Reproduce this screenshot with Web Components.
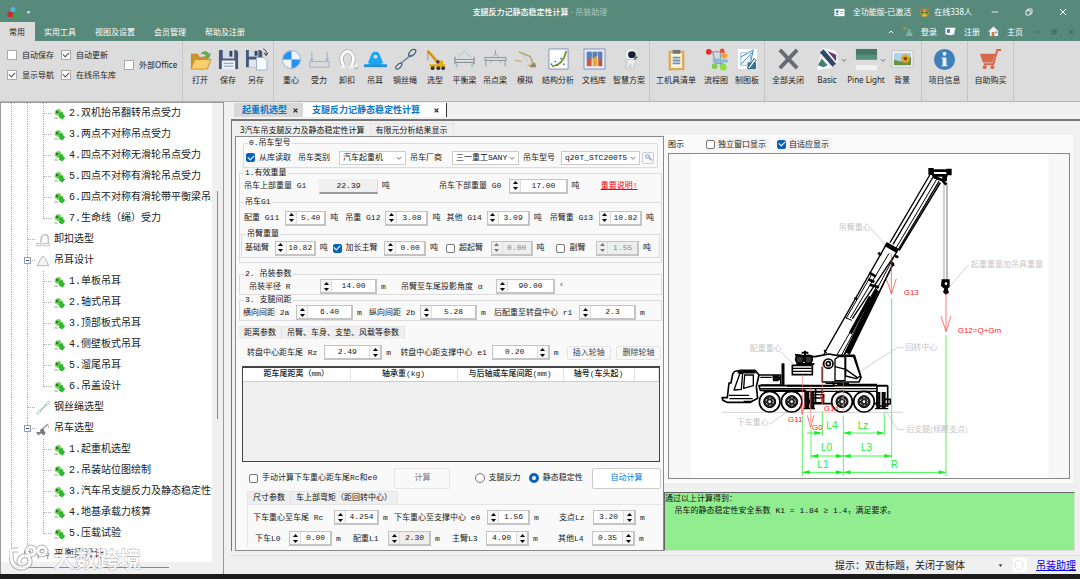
<!DOCTYPE html>
<html lang="zh-CN">
<head>
<meta charset="utf-8">
<title>支腿反力记静态稳定性计算 - 吊装助理</title>
<style>
body { margin: 0; background: #f0f0f0; --ui: "Noto Sans", "Noto Sans CJK SC", sans-serif; --form: "Liberation Mono", "Noto Sans CJK SC", monospace; font: 8px/12px var(--ui); color: #222; }
</style>
</head>
<body>
<crane-app></crane-app>
<script>
const BASE = `*{box-sizing:border-box}
button,input,select,textarea{font:inherit;color:inherit;margin:0;padding:0}
button{border:0;background:none;white-space:nowrap}
svg{display:block;flex:none}
label{display:flex;align-items:center;gap:4px;white-space:nowrap}
input[type=checkbox],input[type=radio]{appearance:none;flex:none;width:9px;height:9px;border:1px solid #777;border-radius:2px;background:#fdfdfd;display:grid;place-items:center}
input[type=checkbox]:checked{background:#0b62b5;border-color:#0b62b5}
input[type=checkbox]:checked::after{content:"";width:5px;height:3px;margin-bottom:2px;border:solid #fff;border-width:0 0 1px 1px;transform:rotate(-45deg)}
input[type=radio]{border-radius:50%;width:10px;height:10px}
input[type=radio]:checked{border:3px solid #0b62b5;background:#fff}`;

function define(name, css, render, after) {
  customElements.define(name, class extends HTMLElement {
    connectedCallback() {
      if (this.shadowRoot) return;
      const root = this.attachShadow({ mode: 'open' });
      const tpl = document.createElement('template');
      tpl.innerHTML = `<style>${BASE}${css}</style>${render(k => this.getAttribute(k) || '', this)}`;
      root.append(tpl.content.cloneNode(true));
      if (after) after(this, root);
    }
  });
}
const tracks = s => s.split(' ').map(n => `minmax(0,${n}fr)`).join(' ');

/* ---------- icon set ---------- */
const ICONS = {
  open: '<path d="M2 6h7l2 3h9v13H2z" fill="#c8922c"/><path d="M2 22l4-10h17l-4 10z" fill="#f8cf6c" stroke="#c8902c"/><path d="M12 6q5-5 9 0l2-1-2 6-6-2 3-1q-2-2-6-2z" fill="#6aa852"/>',
  save: '<path d="M2 2h18l2 2v18H2z" fill="#46577a"/><path d="M6 2h12v9H6z" fill="#d4dae6"/><path d="M13 3h3v6h-3z" fill="#35435f"/><path d="M5 13h14v9H5z" fill="#eef2f8"/><path d="M7 16h10M7 19h10" stroke="#7d93b5"/>',
  saveas: '<path d="M1 2h15l2 2v16H1z" fill="#46577a"/><path d="M4 2h10v7H4z" fill="#d4dae6"/><path d="M10 3h3v5h-3z" fill="#35435f"/><path d="M4 12h9v8H4z" fill="#dfe6f1"/><path d="M12 10h8l3 3v10H12z" fill="#f7faff" stroke="#9eafcc"/><path d="M19 1q4 1 3 6M20 5l2 3 2-3" fill="none" stroke="#333"/>',
  cog: '<circle cx="12" cy="12" r="9.500" fill="#eef4fb" stroke="#7e9cc0" stroke-width=".7"/><path d="M12 12V3A9 9 0 0 0 3 12zM12 12v9a9 9 0 0 0 9-9z" fill="#2492ee"/>',
  force: '<path d="M4 4v9M20 4v9" stroke="#8eb5d4"/><path d="M2 11l2 3 2-3zM18 11l2 3 2-3z" fill="#8eb5d4"/><path d="M2 14h20v6H2z" fill="#d8dadd" stroke="#a9afb6"/>',
  shackle: '<path d="M8 19Q4 11 7 7q5-7 10 0 3 4-1 12" fill="none" stroke="#aaa" stroke-width="4.500"/><path d="M8 19Q4 11 7 7q5-7 10 0 3 4-1 12" fill="none" stroke="#fff" stroke-width="3"/><path d="M5 20h5M14 20h6l2-3" stroke="#eee" stroke-width="3" fill="none"/><path d="M19 21h4" stroke="#999"/>',
  lug: '<path d="M3 18C9 18 5 4 12 4s3 14 9 14z" fill="#1ba6f5"/><path d="M4 16C8 5 9 4 12 4s4 1 8 12z" fill="#1ba6f5"/><path d="M0 17h24v3H0z" fill="#2191dc"/><circle cx="12" cy="9" r="2" fill="#dcdcdc"/>',
  sling: '<path d="M7 16L18 7" stroke="#6d86a0" stroke-width="1.500"/><ellipse cx="5" cy="19" rx="2" ry="4" transform="rotate(45 5 19)" fill="none" stroke="#4b6682" stroke-width="1.300"/><ellipse cx="19" cy="5" rx="2.500" ry="4.500" transform="rotate(45 19 5)" fill="none" stroke="#3f5e7e" stroke-width="1.300"/>',
  crane: '<path d="M4 3L16 17" stroke="#e5a51b" stroke-width="3"/><path d="M4 3L16 17M4 3v10" stroke="#9b7416" fill="none" stroke-width=".7"/><path d="M6 17h16v3H6zM14 13h6v4h-6z" fill="#e8ac16"/><path d="M13 13h3v3h-3z" fill="#333"/><g fill="#333"><circle cx="9" cy="21" r="2"/><circle cx="15" cy="21" r="2"/><circle cx="20" cy="21" r="2"/></g>',
  beam: '<path d="M5 10l7-7 7 7" fill="none" stroke="#9cc8d2"/><path d="M2 9v8M22 9v8M2 12h20v3H2z" fill="#e4e4e4" stroke="#8c9298" stroke-width="1.300"/><path d="M4 16v4M20 16v4" stroke="#9cc8d2" stroke-width="2"/>',
  beam2: '<path d="M12 2v5" stroke="#6fb0c0"/><path d="M8 10l4-4 4 4" fill="none" stroke="#9aa"/><path d="M1 10h22v3H1z" fill="#ddd" stroke="#8c9298"/><path d="M2 13v6M22 13v6M7 13v2M17 13v2" stroke="#8c9298"/>',
  sim: '<path d="M5 4l12 5 4 10" fill="none" stroke="#b4a373" stroke-width="1.500"/><path d="M16 18l6-3 1 5h-6z" fill="#8c8569"/><path d="M1 13l8 1M14 19l5-3" stroke="#d8ba8e" stroke-width="2"/><path d="M8 5l6 9" stroke="#aaa" stroke-width=".6"/>',
  chart: '<path d="M2 1h20v21H2z" fill="#fcfdff" stroke="#7e91b8"/><path d="M5 19Q17 18 20 3" fill="none" stroke="#78982e" stroke-width="2"/><path d="M4 17h1.500M8 14h1.500M10 18h1.500M14 11h1.500M17 17h1.500" stroke="#375cae" stroke-width="1.500"/>',
  docs: '<path d="M1 1h22v21H1z" fill="#e5ebf8" stroke="#8394bc"/><path d="M4 4h5v15H4z" fill="#d05742"/><path d="M10 4h5v15h-5z" fill="#e8aa36"/><path d="M16 4h4v15h-4z" fill="#c84b3b"/><path d="M4 4h5v6l-5 2zM10 4h5v4l-5 3zM16 4h4v7l-4 1z" fill="#4f82c7"/>',
  robot: '<circle cx="14" cy="7" r="5.500" fill="#f8f8f8"/><ellipse cx="14.500" cy="7" rx="4" ry="3.500" fill="#172132"/><path d="M10 12h7l2 3-2 1-1 6h-2l-1-5-3 5H8l2-7-3-1z" fill="#eceef1" stroke="#a5acb2" stroke-width=".5"/><path d="M17 12l3-3" stroke="#4b515c" stroke-width="1.500"/>',
  clip: '<path d="M5 4h14v18H5z" fill="#fff4db" stroke="#ddaa58" stroke-width="2.500"/><path d="M8 2h8v4H8z" fill="#70747b"/><path d="M8 10h8M8 13h8M8 16h8" stroke="#6b94c2" stroke-width="2"/>',
  flow: '<path d="M4 4h12M16 4v15M8 4l3 12h8" fill="none" stroke="#6d91b7"/><circle cx="4" cy="4" r="3" fill="#e52b2b"/><circle cx="18" cy="3" r="2.500" fill="#ec4c36"/><path d="M8 11h7v4H8z" fill="#85b8e0"/><path d="M20 4l4 4-4 4-4-4z" fill="#fa9f38"/><path d="M15 12h9v3h-9z" fill="#85b8e0"/><circle cx="19" cy="20" r="3.500" fill="#8be03f"/><circle cx="10" cy="19" r="3" fill="#82cd58"/>',
  board: '<path d="M2 1h20v21H2z" fill="#fff"/><path d="M4 10L18 2l-3 14M4 18L18 4" fill="none" stroke="#3c85b0"/><path d="M5 5h10v13H5z" fill="none" stroke="#96bfe0"/><path d="M12 15h9v7h-9z" fill="#3c718d"/><path d="M12 21l7-10 2 2-7 9z" fill="#e3eef4" stroke="#265d79"/>',
  close: '<path d="M3 2L21 21M21 2L3 21" stroke="#696b74" stroke-width="4"/>',
  basic: '<path d="M7 0l14 3 2 11-8 7-14 2 3-12z" fill="#f8f8f8"/><path d="M6 3L19 18" stroke="#31466d" stroke-width="5"/><path d="M2 18l4-7 6 7-4 2z" fill="#428078"/><path d="M12 3l9 4v7z" fill="#5f3b6e"/>',
  pine: '<path d="M1 1h22v11H1z" fill="#447767"/><path d="M1 7h22v5H1z" fill="#56907d"/><path d="M1 18h22v5H1z" fill="#f2f2f2"/>',
  back: '<path d="M1 3h22v17H1z" fill="#fff" stroke="#bbb"/><path d="M3 5h18v13H3z" fill="#afd3e8"/><path d="M3 12l7 2 11-5v9H3z" fill="#699344"/><circle cx="15" cy="11" r="4.500" fill="#e4a62c"/><circle cx="15" cy="11" r="2" fill="#845017"/>',
  info: '<circle cx="12" cy="12" r="11" fill="#3f80ba"/><circle cx="12" cy="6" r="2" fill="#e9f2fa"/><path d="M9 10h5v8h1v1H9v-1h1v-7H9z" fill="#e9f2fa"/>',
  cart: '<path d="M23 2h-4l-4 15H5" fill="none" stroke="#d86645" stroke-width="2"/><path d="M1 6h16l-3 9H4z" fill="#d9674a"/><circle cx="6" cy="20" r="2" fill="#d86645"/><circle cx="14" cy="20" r="2" fill="#d86645"/>',
  app: '<circle cx="12" cy="7" r="5" fill="#55b5df"/><path d="M1 12h9l2 3v7H3l-2-2z" fill="#c42f31"/><path d="M12 13h10l1 2v7H12z" fill="#3ba34b"/>',
  card: '<path d="M1 4h22v16H1z" fill="#fff"/><circle cx="7" cy="10" r="3" fill="#3c71ad"/><path d="M3 17q4-6 8 0zM14 9h6v2h-6zM14 14h6v1h-6z" fill="#54779f"/>',
  mask: '<circle cx="12" cy="13" r="9" fill="#c9a33b"/><path d="M2 2l9 5-6 6zM22 2l-9 5 6 6z" fill="#cf6d38"/><path d="M5 11h5v3H5zM14 11h5v3h-5z" fill="#33612d"/><path d="M6 17q6 5 12 0z" fill="#efd677"/><path d="M3 15l5 6M21 15l-5 6" stroke="#7a9f3c" stroke-width="3"/>',
  people: '<g opacity=".6"><circle cx="6" cy="5" r="4" fill="#c29549"/><circle cx="16" cy="10" r="4" fill="#84c0a6"/><path d="M9 22q0-9 7-9t7 9z" fill="#a9cabd"/></g>',
  reg: '<path d="M1 4h22l-4 14-6 2-12-2z" fill="#fff"/><path d="M4 7h7v8H4z" fill="#517dbc"/><path d="M15 20l8-8-3 7z" fill="#acd0ef"/>',
  home: '<path d="M2 12L12 2l10 10v10H4V12z" fill="#f3f4ef"/><path d="M1 12L12 1l11 11" fill="none" stroke="#e0db97" stroke-width="2"/><path d="M8 13h6v10H8z" fill="#d07652"/><path d="M16 12h4v4h-4z" fill="#4aa0c9"/>',
  min: '<path d="M2 12h20" stroke="currentColor" stroke-width="2.500"/>',
  restore: '<path d="M3 8h13v13H3zM8 8V3h13v13h-5" fill="none" stroke="currentColor" stroke-width="2.500"/>',
  x: '<path d="M3 3l18 18M21 3L3 21" stroke="currentColor" stroke-width="3"/>',
  xb: '<path d="M3 3l18 18M21 3L3 21" stroke="currentColor" stroke-width="6"/>',
  up: '<path d="M3 17l9-9 9 9" fill="none" stroke="currentColor" stroke-width="4"/>',
  down: '<path d="M3 8l9 9 9-9" fill="none" stroke="currentColor" stroke-width="4"/>',
  tri: '<path d="M3 7h18L12 18z" fill="currentColor"/>',
  leaf: '<path d="M2 6q6-7 12-2l2 10-7 3-8-5z" fill="#7bd85c"/><path d="M9 10l8-2 3 7h3l-6 8-8-4 2-1z" fill="#2fb733"/><path d="M4 5l5 1v4l-5 1z" fill="#2b7d2b"/><path d="M1 17l7 2v3H1z" fill="#c3d3c0"/>',
  tshackle: '<path d="M9 17q-2-13 6-14t6 15" fill="none" stroke="#c5c5c5" stroke-width="3"/><path d="M1 18h8v4H1zM12 18h11v4H12z" fill="none" stroke="#bbb" stroke-width="1.500"/>',
  tlug: '<path d="M1 20h22M3 19Q9 4 12 4t9 15" fill="#f5f5f5" stroke="#aaa" stroke-width="1.500"/>',
  tsling: '<path d="M5 19L20 4" stroke="#6fbab8" stroke-width="2"/><ellipse cx="5" cy="19" rx="2" ry="4" transform="rotate(45 5 19)" fill="#fff" stroke="#70aeb4"/><ellipse cx="20" cy="4" rx="2" ry="4" transform="rotate(45 20 4)" fill="#fff" stroke="#70aeb4"/>',
  tcrane: '<path d="M8 15L20 4" fill="none" stroke="#85808c" stroke-width="2"/><path d="M1 17h15v3H1zM8 12h5l2 5H7z" fill="#7a7488"/><path d="M3 21h3M11 21h4" stroke="#444" stroke-width="2"/><path d="M20 3l2 8" stroke="#c66"/>',
  tbeam: '<path d="M3 7l9-5 9 5M2 9h20v4H2zM4 13v6M20 13v6" fill="none" stroke="#888" stroke-width="1.500"/>',
  find: '<circle cx="9" cy="9" r="5" fill="#d8eafa" stroke="#6f9bd1" stroke-width="2"/><path d="M13 13l7 7M16 9v9h6" fill="none" stroke="#6f88d1" stroke-width="2"/>'
};
const icon = (n, s) => `<svg width="${s}" height="${s}" viewBox="0 0 24 24" aria-hidden="true">${ICONS[n]}</svg>`;

/* ---------- title bar with ribbon tabs ---------- */
define('title-bar', `
:host{display:block;background:#588a7b;color:#fff}
.top{display:grid;grid-template-columns:1fr auto 1fr;height:22px;align-items:center;padding-top:2px}
.l{display:flex;align-items:center;gap:7px;padding-left:7px}
h1{font-size:8px;font-weight:500;margin:0;white-space:nowrap}
h1 span{color:#a9c8be;font-weight:400}
.r{display:flex;justify-content:flex-end;align-items:center;gap:8px}
.w{display:flex;gap:26px;padding:0 13px 0 11px}
button{display:flex;align-items:center;gap:8px}
.bot{display:flex;justify-content:space-between;height:19px}
nav{display:flex;gap:19px}
nav button{padding:0}
nav button:first-child{background:#dcdcdc;color:#222;padding:0 10px 0 9px;margin-right:-10px}
.m{display:flex;align-items:center;gap:8px;padding-right:6px}
.m .d{color:#36584d;margin-left:3px}
`, () => `
<div class="top"><div class="l">${icon('app', 12)}<button aria-label="快速访问">${icon('tri', 5)}</button></div>
<h1>支腿反力记静态稳定性计算 <span>- 吊装助理</span></h1>
<div class="r"><button>${icon('card', 11)}全功能版-已激活</button><button style="gap:4px">${icon('mask', 11)}在线338人</button>
<div class="w"><button aria-label="最小化">${icon('min', 8)}</button><button aria-label="还原">${icon('restore', 8)}</button><button aria-label="关闭">${icon('x', 8)}</button></div></div></div>
<div class="bot"><nav><button>常用</button><button>实用工具</button><button>视图及设置</button><button>会员管理</button><button>帮助及注册</button></nav>
<div class="m"><button aria-label="折叠">${icon('up', 6)}</button><button>${icon('people', 11)}登录</button><button>${icon('reg', 11)}注册</button><button>${icon('home', 11)}主页</button>
<button class="d" aria-label="最小化子窗体">${icon('min', 6)}</button><button class="d" aria-label="还原子窗体">${icon('restore', 6)}</button><button class="d" aria-label="关闭子窗体">${icon('x', 6)}</button></div></div>`);

define('ribbon-button', `
:host{display:block;flex:none}
button{width:100%;display:flex;flex-direction:column;align-items:center;gap:3px;padding:7px 0 0}
.i{display:flex;align-items:center;gap:2px}
.i svg + svg{color:#777;margin-right:-8px}
`, a => `<button><span class="i">${icon(a('icon'), 23)}${a('menu') ? icon('down', 6) : ''}</span><span>${a('label')}</span></button>`,
  el => { el.style.width = el.getAttribute('w') + 'px'; });

define('ribbon-bar', `
:host{display:flex;height:61px;background:#dcdcdc;border-bottom:1px solid #b4b4b4}
.g{display:flex;border-right:1px solid #c6c6c6;padding:0 3px}
.opts{display:grid;grid-template-columns:54px 63px 1fr;grid-template-rows:20px 20px;padding:4px 4px 0 7px;width:183px}
.opts label{gap:5px}
.opts .o{grid-column:3;grid-row:1/3}
input[type=checkbox]{border-color:#aaa;border-radius:0;background:#fff;width:10px;height:10px}
input[type=checkbox]:checked{background:#fff;border-color:#aaa}
input[type=checkbox]:checked::after{border-color:#555}
`, () => {
  const b = (icon, label, w, menu) => `<ribbon-button icon="${icon}" label="${label}" w="${w}"${menu ? ' menu="1"' : ''}></ribbon-button>`;
  return `<div class="g opts"><label><input type="checkbox">自动保存</label><label><input type="checkbox" checked>自动更新</label><label class="o"><input type="checkbox">外部Office</label>
<label><input type="checkbox" checked>显示导航</label><label><input type="checkbox" checked>在线吊车库</label></div>
<div class="g">${b('open', '打开', 28)}${b('save', '保存', 28)}${b('saveas', '另存', 28)}</div>
<div class="g">${b('cog', '重心', 28)}${b('force', '受力', 28)}${b('shackle', '卸扣', 28)}${b('lug', '吊耳', 28)}${b('sling', '钢丝绳', 32)}${b('crane', '选型', 28)}${b('beam', '平衡梁', 31)}${b('beam2', '吊点梁', 30)}${b('sim', '模拟', 30)}${b('chart', '结构分析', 36)}${b('docs', '文档库', 36)}${b('robot', '智慧方案', 34)}</div>
<div class="g">${b('clip', '工机具清单', 46)}${b('flow', '流程图', 34)}${b('board', '制图板', 28)}</div>
<div class="g">${b('close', '全部关闭', 40)}${b('basic', 'Basic', 38, 1)}${b('pine', 'Pine Light', 40, 1)}${b('back', '背景', 32)}</div>
<div class="g">${b('info', '项目信息', 39)}</div><div class="g">${b('cart', '自助购买', 39)}</div>`;
});

/* ---------- navigation tree ---------- */
define('tree-node', `
:host{display:flex;align-items:center;height:21px;white-space:nowrap;font:10px/21px var(--form);color:#222}
span{flex:none}
.n{width:12px}
.i{display:flex;width:15px}
:host([top]) .i{width:18px}
`, a => {
  const top = a('top'), last = a('last'), tog = a('toggle');
  const dot = 'stroke="#aaa" stroke-dasharray="1 1"';
  return `<svg width="${top ? 35 : 53}" height="21"><path d="M10.500 0v21M26.500 0v21" ${dot} fill="none"/>${top
    ? `<path d="M27 10.500h8" ${dot}/>${tog ? '<rect x="23.500" y="7.500" width="6" height="6" fill="#fff" stroke="#8c9dbb"/><path d="M25 10.500h3" stroke="#456"/>' : ''}`
    : `<path d="M42.500 0v${last ? 11 : 21}M43 10.500h8" ${dot} fill="none"/>`}</svg><span class="i">${icon(a('icon') || 'leaf', top ? 14 : 12)}</span>${a('n') ? `<span class="n">${a('n')}.</span>` : ''}<span>${a('label')}</span>`;
});
define('nav-tree', `
:host{display:grid;grid-template-columns:minmax(0,1fr) 11px;grid-template-rows:minmax(0,1fr) 12px;width:224px;border:1px solid #999;border-width:1px 1px 0 1px;background:#f0f0f0}
.list{overflow:hidden;background:#fff;contain:size}
.v{padding:88px 0 0 5px;contain:size}.v i{display:block;width:1px;height:228px;background:#888}
.h{padding:5px 0 0 13px}.h i{display:block;width:155px;height:1px;background:#888}
`, () => {
  const kids = (a, start = 1) => a.map((t, i) => `<tree-node n="${start + i}" label="${t}"${i === a.length - 1 ? ' last="1"' : ''}></tree-node>`).join('');
  const top = (t, ic, tog) => `<tree-node top="1" icon="${ic}" label="${t}"${tog ? ' toggle="1"' : ''}></tree-node>`;
  return `<div class="list">${kids(['双机抬吊翻转吊点受力', '两点不对称吊点受力', '四点不对称无滑轮吊点受力', '四点不对称有滑轮吊点受力', '四点不对称有滑轮带平衡梁吊点受力', '生命线（绳）受力'], 2)}
${top('卸扣选型', 'tshackle')}${top('吊耳设计', 'tlug', 1)}${kids(['单板吊耳', '轴式吊耳', '顶部板式吊耳', '侧壁板式吊耳', '溜尾吊耳', '吊盖设计'])}
${top('钢丝绳选型', 'tsling')}${top('吊车选型', 'tcrane', 1)}${kids(['起重机选型', '吊装站位图绘制', '汽车吊支腿反力及静态稳定性计算', '地基承载力核算', '压载试验'])}${top('平衡梁设计', 'tbeam', 1)}</div>
<div class="v"><i></i></div><div class="h"><i></i></div>`;
});

/* ---------- form building blocks ---------- */
/* A row whose cells keep their proportions when the form is widened. */
define('form-row', `:host{display:grid;align-items:center;height:15px}`,
  () => `<slot></slot>`, el => { el.style.gridTemplateColumns = tracks(el.getAttribute('cols')); });

/* cols: label, box, unit */
define('spin-field', `
:host{display:grid;align-items:center;white-space:nowrap}
.box{display:flex;height:15px;background:#fff;border:1px solid #c4c4c4;border-width:1px 2px 2px 1px}
.box.r{flex-direction:row-reverse}
.box input{flex:1;min-width:0;width:0;border:0;background:none;text-align:center;outline:0}
.sp{flex:none;display:flex;flex-direction:column;justify-content:space-between;width:11px;padding:1px 2px;border-right:1px solid #ddd;background:#f6f6f6}
.r .sp{border-right:0;border-left:1px solid #ddd}
.sp button{display:grid;place-items:center;height:4px}
.off{background:#eee}
.dim{background:#eee;color:#888}
.off .sp,.dim .sp{background:#eee}
.dim svg{opacity:.5}
.ro{background:#f0f0f0;border-color:#eee #ddd #999 #eee;border-width:1px 1px 2px 1px}
.unit{padding-left:4px}
`, a => `${a('check') ? `<label><input type="checkbox"${a('check') === 'on' ? ' checked' : ''}>${a('label')}</label>` : `<label for="v">${a('label')}</label>`}
<div class="box ${a('side') === 'right' ? 'r' : ''} ${a('off')} ${a('ro') ? 'ro' : ''}">${a('ro') ? '' : `<span class="sp"><button aria-label="增加" tabindex="-1"><svg width="5" height="3"><path d="M0 3h5L2.500 0z"/></svg></button><button aria-label="减少" tabindex="-1"><svg width="5" height="3"><path d="M0 0h5L2.500 3z"/></svg></button></span>`}
<input id="v" value="${a('value')}" aria-label="${a('label')}"${a('ro') || a('off') === 'off' ? ' readonly' : ''}${a('off') === 'dim' ? ' disabled' : ''}></div><span class="unit">${a('unit')}</span>`,
  el => { el.style.gridTemplateColumns = tracks(el.getAttribute('cols')); });

define('pick-field', `
:host{display:grid;align-items:center;white-space:nowrap}
.s{display:grid;align-items:center;height:14px;background:#fff;border:1px solid #ccc}
select,.s svg{grid-area:1/1}
select{appearance:none;border:0;background:none;width:100%;padding:0 0 0 3px;color:#111;outline:0}
.s svg{justify-self:end;margin-right:3px;color:#777;pointer-events:none}
`, a => `<label for="s">${a('label')}</label><div class="s"><select id="s"><option>${a('value')}</option></select>${icon('down', 6)}</div>`,
  el => { el.style.gridTemplateColumns = tracks(el.getAttribute('cols')); });

define('group-box', `
fieldset{margin:0;padding:0;border:1px solid #dcdcdc;min-width:0}
:host{display:block}
:host([open]) fieldset{border-width:1px 0 0 0}
legend{height:10px;line-height:10px;margin-left:4px;padding:0 1px;color:#111}
`, a => `<fieldset><legend>${a('label')}</legend><slot></slot></fieldset>`);

define('tab-strip', `
:host{display:flex;align-items:flex-end}
button{height:13px;padding:0 5px;background:#efefef;border:1px solid #e4e4e4;border-width:1px 1px 0 0;color:#111}
button:first-child{background:#f9f9f9;height:14px}
`, a => a('tabs').split('|').map(t => `<button role="tab">${t}</button>`).join(''));

define('calc-form', `
:host{display:block;font:8px/12px var(--form);border:1px solid #8a8a8a;background:#f9f9f9;padding:1px 1px 0 3px}
.b0{margin:0 4px 0 4px}.b0 form-row{height:19px}
.b4{margin:0 1px}
.g{margin-top:3px}
.gg{margin-top:6px}
a{color:#f00}
.tool{display:grid;place-items:center;width:12px;height:12px;border:1px solid #ccc;border-radius:2px}
.btn{height:14px;border:1px solid #e4e4e4;border-radius:2px;color:#444;width:100%}
.wrap{border:1px solid #444;border-width:2px 1px 1px 1px;background:#f0f0f0;height:96px;margin:6px 2px 5px 3px}
table{width:100%;border-collapse:collapse;table-layout:fixed;background:#fff}
th{font-weight:500;height:13px;padding:0;border-right:1px solid #e2e2e2;border-bottom:1px solid #ccc}
.big{height:21px;border:1px solid #e6e6e6;border-radius:2px;width:100%;color:#777}
.auto{border-color:#ccc;background:#fff;color:#0a78d4}
.sub{margin-left:8px;border-left:1px solid #e4e4e4}
.page{border-top:1px solid #e4e4e4;padding-top:5px}
.page form-row + form-row{margin-top:6px}
`, () => `
<group-box class="b0" label="0.吊车型号"><form-row cols="2 52 112 113 119 15">
<span></span><label><input type="checkbox" checked>从库读取</label>
<pick-field label="吊车类别" value="汽车起重机" cols="41 67 4"></pick-field>
<pick-field label="吊车厂商" value="三一重工SANY" cols="42 67 4"></pick-field>
<pick-field label="吊车型号" value="q20T_STC200T5" cols="38 79 2"></pick-field>
<button class="tool" aria-label="查找">${icon('find', 9)}</button></form-row></group-box>
<group-box label="1.有效重量"><form-row cols="4 194 161 60" style="height:16px">
<span></span><spin-field label="吊车上部重量 G1" value="22.39" unit="吨" ro="1" cols="75 58 61"></spin-field>
<spin-field label="吊车下部重量 G0" value="17.00" unit="吨" cols="70 58 33"></spin-field>
<a href="#notes">重要说明!</a></form-row>
<group-box class="g" open label="吊车G1"><form-row cols="4 101 101 103 111" style="height:22px">
<span></span><spin-field label="配重 G11" value="5.40" unit="吨" cols="41 41 19"></spin-field>
<spin-field label="吊重 G12" value="3.08" unit="吨" cols="40 43 18"></spin-field>
<spin-field label="其他 G14" value="3.09" unit="吨" cols="40 43 20"></spin-field>
<spin-field label="吊臂重 G13" value="10.82" unit="吨" cols="49 43 19"></spin-field></form-row>
<group-box class="b4" label="吊臂重量"><form-row cols="3 88 114 111 103" style="height:18px">
<span></span><spin-field label="基础臂" value="10.82" unit="吨" cols="30 41 17"></spin-field>
<spin-field label="加长主臂" check="on" value="0.00" unit="吨" cols="52 42 20"></spin-field>
<spin-field label="超起臂" check="off" value="0.00" unit="吨" off="dim" cols="45 42 24"></spin-field>
<spin-field label="副臂" check="off" value="1.55" unit="吨" off="dim" cols="40 43 20"></spin-field></form-row></group-box>
<div style="height:4px"></div></group-box></group-box>
<group-box label="2. 吊装参数" class="gg"><form-row cols="9 152 260">
<span></span><spin-field label="吊装半径 R" value="14.00" unit="m" cols="71 57 24"></spin-field>
<spin-field label="吊臂至车尾投影角度 α" value="90.00" unit="°" cols="95 59 106"></spin-field></form-row></group-box>
<group-box label="3. 支腿间距"><form-row cols="3 126 125 167">
<span></span><spin-field label="横向间距 2a" value="6.40" unit="m" cols="53 57 16"></spin-field>
<spin-field label="纵向间距 2b" value="5.28" unit="m" cols="51 57 17"></spin-field>
<spin-field label="后配重至转盘中心 r1" value="2.3" unit="m" cols="85 57 25"></spin-field></form-row></group-box>
<tab-strip style="margin-top:5px" tabs="距离参数|吊臂、车身、支垫、风载等参数"></tab-strip>
<form-row style="margin-top:6px" cols="8 153 166 44 5 45 1">
<span></span><spin-field label="转盘中心距车尾 Rz" value="2.49" unit="m" side="right" cols="77 58 18"></spin-field>
<spin-field label="转盘中心距支撑中心 e1" value="0.20" unit="m" side="right" cols="91 58 17"></spin-field>
<button class="btn">插入轮轴</button><span></span><button class="btn">删除轮轴</button></form-row>
<div class="wrap"><table><colgroup><col width="107"><col width="107"><col width="106"><col width="71"><col></colgroup><thead><tr><th>距车尾距离（mm）</th><th>轴承重(kg)</th><th>与后轴或车尾间距(mm)</th><th>轴号(车头起)</th><th></th></tr></thead></table></div>
<form-row style="height:22px" cols="10 145 56 24 54 63 69 1">
<span></span><label><input type="checkbox">手动计算下车重心距车尾Rc和e0</label><button class="big">计算</button><span></span>
<label><input type="radio" name="mode">支腿反力</label><label><input type="radio" name="mode" checked>静态稳定性</label><button class="big auto">自动计算</button></form-row>
<div class="sub"><tab-strip style="margin-top:2px" tabs="尺寸参数|车上部弯矩（距回转中心）"></tab-strip>
<div class="page"><form-row cols="5 141 165 103">
<span></span><spin-field label="下车重心至车尾 Rc" value="4.254" unit="m" cols="81 45 15"></spin-field>
<spin-field label="下车重心至支撑中心 e0" value="1.56" unit="m" cols="93 43 29"></spin-field>
<spin-field label="支点Lz" value="3.20" unit="m" side="right" cols="34 43 26"></spin-field></form-row>
<form-row cols="7 98 99 106 104">
<span></span><spin-field label="下车L0" value="0.00" unit="m" cols="34 43 21"></spin-field>
<spin-field label="配重L1" value="2.30" unit="m" off="off" cols="35 43 21"></spin-field>
<spin-field label="主臂L3" value="4.90" unit="m" side="right" cols="34 43 29"></spin-field>
<spin-field label="其他L4" value="0.35" unit="m" side="right" cols="34 43 27"></spin-field></form-row></div></div>`);

/* ---------- crane diagram ---------- */
const wheel = x => `<g transform="translate(${x} 817)"><circle r="31" fill="#fff" stroke="#000" stroke-width="5"/><circle r="18" fill="#222" stroke="#000" stroke-width="3"/><circle r="11" fill="none" stroke="#ddd" stroke-width="3" stroke-dasharray="6 6"/><circle r="4" fill="#fff"/></g>`;
const arrowDown = (x, y0, y1) => `<path d="M${x} ${y0}V${y1}M${x - 15} ${y1 - 46}L${x} ${y1}l15-46" fill="none" stroke="#f33" stroke-width="2"/>`;
const dim = (x0, x1, y) => `<path d="M${x0} ${y}H${x1}" stroke="#3f4" stroke-width="3"/><path d="M${x0} ${y}l22-6v12zM${x1} ${y}l-22-6v12z" fill="#1e2"/>`;
define('crane-diagram', `
:host{display:block;border:1px solid #888;background:#f7f7f7;min-height:0;overflow:hidden}
svg{width:100%;height:100%}
text{font:24px "Noto Sans CJK SC",sans-serif;fill:#c6c6c6}
.red{font:24px "Liberation Sans",sans-serif;fill:#f22}
.gr{font:30px "Liberation Sans",sans-serif;fill:#2e3}
`, () => `<svg viewBox="16 74 1200 972" role="img" aria-label="汽车吊受力图示">
<path d="M84 74h1070v972H84z" fill="#fff"/>
<g fill="none" stroke="#bbb" stroke-width="2"><path d="M622 298l48 55M915 406l-60 70M352 668l50 48M720 655h-20L575 735M318 885l92-70M722 901h-20l-36-58M175 849H718"/></g>
<g fill="none" stroke="#000" stroke-width="4">
<path d="M841 160V452" stroke="#777" stroke-width="2"/><path d="M850 160V452" stroke="#777" stroke-width="3"/>
<path d="M679 340L800 134M688 345L810 140M703 362L826 156" />
<path d="M696 358L819 150" stroke-width="3"/><path d="M706 364L830 160" stroke-width="5"/>
<path d="M799 120l14 24 22 8 13 14M803 124h50M812 138h40" stroke-width="8"/>
<path d="M796 118h12v16h-12zM850 120h12v16h-12zM838 142h10v12h-10z" fill="#000"/>
<path d="M483 670L668 345l32 22L566 568" fill="#fff"/>
<path d="M666 344l36 21" stroke-width="14"/>
<path d="M545 565l20 8M548 566l78-134M512 690L640 470M527 690L690 385M676 372L560 566" stroke-width="3"/>
<path d="M540 680L632 500M556 675L690 400" stroke-width="5"/>
<path d="M550 672L640 482" stroke-width="14"/><path d="M560 612l60-110" stroke-width="10"/>
<path d="M617 430l20 12M614 450l18 8M618 466l28 8M572 508h8M644 370l8 8M694 380l10 4M682 398l8 12" stroke-width="8"/>
<path d="M481 662l8 10M483 670l-3 10 30 12" />
</g>
<g fill="#000"><path d="M834 450h24v22l-6 6 4 12-10 6-8-8 4-10-10-8z"/><circle cx="847" cy="463" r="4" fill="#fff"/></g>
<g fill="#fff" stroke="#000" stroke-width="5" stroke-linejoin="round">
<path d="M286 769H670v54H440l-16-40H290z"/>
<path d="M206 740q2-14 12-15l14-2h42l12 14-8 34 4 36-22 12H190l-12-6-3-8h16l5-44h6z"/>
<path d="M222 728h54" stroke-width="9"/>
<path d="M229 732l-18 50 22-2 4-50zM243 737h26v32l-29 8z" stroke-width="4"/>
<path d="M196 798h60M197 808h70M240 816h24" stroke-width="4"/>
<path d="M283 737h68v30h-60M290 744h34" stroke-width="4" fill="none"/>
<path d="M356 704h4v64h-4z" fill="#000"/>
<path d="M290 778h380M300 786h360" stroke-width="4"/>
<path d="M370 769h140v-10M520 766h120" stroke-width="6"/>
<path d="M476 712v46h110l6-14-20-66h-54l-22-4-42 8h-20l-40-6" />
<path d="M386 708h60v28h-60z"/><path d="M388 717h56M388 726h56" stroke-width="4"/>
<circle cx="408" cy="690" r="12" fill="#333"/><circle cx="434" cy="690" r="12" fill="#333"/><path d="M424 664v34M414 670h20M398 704h54M396 680h50" stroke-width="6"/>
<circle cx="494" cy="703" r="14"/><circle cx="494" cy="703" r="6"/>
<path d="M514 690l10-8h20v72h-30zM546 680l24 2 20 58-12 8-32-8zM514 712l32 8 34 24" stroke-width="4"/>
<path d="M450 796h30v24h-30zM456 776v42M476 776v42M452 788h28M452 806h28" stroke-width="4"/>
<path d="M640 770h32v60h-32zM660 810h20v14h-20z"/>
</g>
<g fill="#111" stroke="#000" stroke-width="4"><path d="M424 790h10v46h-10zM440 790h10v46h-10zM640 790h8v46h-8zM656 790h8v46h-8z"/><path d="M328 740h16l6 8-8 6h-12zM420 838h34M634 838h40M486 762h70"/></g>
${wheel(318)}${wheel(384)}${wheel(535)}${wheel(601)}
<g fill="none" stroke="#f77" stroke-width="2"><path d="M416 736V846M476 700V825M441 770V880M539 760V850"/></g>
${arrowDown(683, 372, 494)}${arrowDown(847, 492, 606)}<path d="M409 820l7 36 7-36M431 858l10 36 10-36M469 795l7 30 7-30" fill="none" stroke="#f33" stroke-width="2"/>
<g stroke="#6e6" stroke-width="3"><path d="M416 860v180M442 896v94M476 845v75M539 860v180M662 850v70M684 506v480M847 618v422"/></g>
<path d="M430 911h40" stroke="#3f4" stroke-width="3"/><path d="M476 911l-24-6v12z" fill="#1e2"/>
${dim(539, 662, 911)}${dim(442, 539, 980)}${dim(539, 684, 980)}${dim(416, 539, 1029)}${dim(539, 847, 1029)}
<text x="525" y="302">吊臂重心</text><text x="922" y="414">起重重量加吊具重量</text><text x="258" y="665">配重重心</text><text x="725" y="663">回转中心</text><text x="219" y="887">下车重心</text><text x="728" y="908">后支腿(倾覆支点)</text>
<g><text class="red" x="720" y="498">G13</text><text class="red" x="882" y="610">G12=Q+Gm</text><text class="red" x="373" y="878">G11</text><text class="red" x="445" y="902">G0</text><text class="red" x="480" y="846">G14</text></g>
<text class="gr" x="488" y="898">L4</text><text class="gr" x="582" y="898">Lz</text><text class="gr" x="472" y="965">L0</text><text class="gr" x="592" y="965">L3</text><text class="gr" x="461" y="1015">L1</text><text class="gr" x="681" y="1015">R</text>
</svg>`);

define('result-pane', `
:host{display:flex;flex-direction:column;min-width:0;padding-right:5px}
.pic{flex:1;min-height:0;display:flex;flex-direction:column;background:#fafafa;padding:0 3px 4px 4px;margin-right:2px}
.bar{display:flex;align-items:center;height:18px;gap:8px}
.bar b{font-weight:400;width:30px;color:#111}
.bar label{gap:3px;background:#f2f2f2;padding-right:3px}
crane-diagram{flex:1}
textarea{display:block;height:59px;margin-top:9px;resize:none;border:1px solid #666;border-color:#666 #ddd #ddd #666;background:#90ee90;font:8px/12px var(--form);color:#111;padding:0;outline:0;overflow:hidden}
`, () => `<div class="pic"><div class="bar"><b>图示</b><label><input type="checkbox">独立窗口显示</label><label><input type="checkbox" checked>自适应显示</label></div><crane-diagram></crane-diagram></div>
<textarea readonly aria-label="计算结果">通过以上计算得到：
  吊车的静态稳定性安全系数 K1 = 1.84 ≥ 1.4，满足要求。</textarea>`);

define('doc-tabs', `
:host{display:flex;height:17px;padding:1px 0 2px 3px;font:bold 9px/14px var(--ui);color:#0a78c8}
div{display:flex;align-items:center;gap:6px;padding:0 5px 0 8px;background:#d8d8d8}
div + div{background:#fff;border-right:1px solid #333;padding:0 7px 0 9px;gap:14px}
button{font-size:9px;font-weight:bold;color:#222}
`, () => `<div><span>起重机选型</span><button aria-label="关闭 起重机选型">${icon('xb', 5)}</button></div><div><span>支腿反力记静态稳定性计算</span><button aria-label="关闭 支腿反力记静态稳定性计算">${icon('xb', 5)}</button></div>`);

define('status-bar', `
:host{display:flex;align-items:center;justify-content:flex-end;height:19px;border-top:1px solid #ddd;font:10px/16px var(--ui);padding-right:4px;color:#222}
button{width:9px;display:grid;place-items:center;margin:0 8px 0 31px}
.o{width:14px;height:14px;background:#fff;border-radius:2px;margin-right:9px}
a{color:#00e}
`, () => `<span>提示：双击标题，关闭子窗体</span><button aria-label="更多">${icon('tri', 5)}</button><svg class="o" viewBox="0 0 14 14"><ellipse cx="6" cy="7" rx="4" ry="5" fill="#fff" stroke="#ddd"/></svg><a href="#home">吊装助理</a>`);

define('brand-mark', `
:host{position:absolute;left:9px;bottom:7px;display:flex;align-items:center;gap:4px;opacity:.85;pointer-events:none}
span{font:500 22px/26px var(--ui);color:#fff;-webkit-text-stroke:1px #aaa;paint-order:stroke}
`, () => `<svg width="40" height="28" viewBox="0 0 40 28" fill="none"><g stroke="#aaa" stroke-width="5"><path d="M2 6v4q0 15 12 14 8-2 7-8-1-5-7-4-6 3-3 8M3 6h6"/><circle cx="22" cy="7" r="4"/><circle cx="33" cy="7" r="4"/></g><g stroke="#fff" stroke-width="3"><path d="M2 6v4q0 15 12 14 8-2 7-8-1-5-7-4-6 3-3 8M3 6h6"/><circle cx="22" cy="7" r="4"/><circle cx="33" cy="7" r="4"/></g></svg><span>大数跨境</span>`);

define('crane-app', `
:host{display:flex;flex-direction:column;min-height:100vh;position:relative}
main{flex:1;display:grid;grid-template-columns:231px minmax(0,1fr);min-height:0}
.work{display:flex;flex-direction:column;min-width:0}
.sheet{flex:1;display:grid;grid-template-columns:minmax(0,432fr) minmax(0,416fr);border:1px solid #777;border-width:2px 0 0 1px;margin-bottom:4px}
.left{padding-left:3px;display:flex;flex-direction:column}
calc-form{flex:1}
.left tab-strip{font:8px/12px var(--ui);height:15px}
result-pane{padding-top:14px}
footer{height:5px;background:#1c1c1c}
`, () => `<title-bar></title-bar><ribbon-bar></ribbon-bar>
<main><nav-tree></nav-tree><div class="work"><doc-tabs></doc-tabs><div class="sheet"><div class="left"><tab-strip tabs="3汽车吊支腿反力及静态稳定性计算|有限元分析结果显示"></tab-strip><calc-form></calc-form></div><result-pane></result-pane></div><status-bar></status-bar></div></main>
<footer></footer><brand-mark></brand-mark>`);
</script>
</body>
</html>
